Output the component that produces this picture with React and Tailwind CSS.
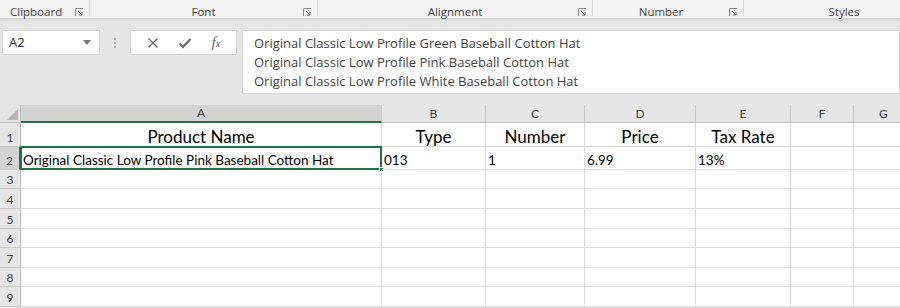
import React from 'react'

const cols = [
  { key: 'A', w: 'w-[361px]' },
  { key: 'B', w: 'w-[104px]' },
  { key: 'C', w: 'w-[99px]' },
  { key: 'D', w: 'w-[111px]' },
  { key: 'E', w: 'w-[95px]' },
  { key: 'F', w: 'w-[63px]' },
  { key: 'G', w: 'w-[60px]' },
]

const rows = [
  { n: 1, h: 'h-[24px]', cells: ['Product Name', 'Type', 'Number', 'Price', 'Tax Rate', '', ''], head: true },
  { n: 2, h: 'h-[23px]', cells: ['Original Classic Low Profile Pink Baseball Cotton Hat', '013', '1', '6.99', '13%', '', ''] },
  { n: 3, h: 'h-[19px]' },
  { n: 4, h: 'h-[20px]' },
  { n: 5, h: 'h-[20px]' },
  { n: 6, h: 'h-[19px]' },
  { n: 7, h: 'h-[20px]' },
  { n: 8, h: 'h-[19px]' },
  { n: 9, h: 'h-[20px]' },
]

const groups = [
  { label: 'Clipboard', w: 'w-[90px]', launcher: true, align: 'justify-start pl-[10px]' },
  { label: 'Font', w: 'w-[228px]', launcher: true, align: 'justify-center' },
  { label: 'Alignment', w: 'w-[275px]', launcher: true, align: 'justify-center' },
  { label: 'Number', w: 'w-[151px]', launcher: true, align: 'justify-center pr-[14px]' },
  { label: 'Styles', w: 'w-[200px]', launcher: false, align: 'justify-center' },
]

function Launcher() {
  return (
    <svg width="9" height="9" viewBox="0 0 9 9" fill="none" className="absolute right-[6px] top-[8px]">
      <path d="M0.5 8V0.5H8" stroke="#8a8a8a" />
      <path d="M3 3l4 4M7 4v3H4" stroke="#666" />
    </svg>
  )
}

export default function App() {
  const font = { fontFamily: '"Open Sans", "Noto Sans", sans-serif' }
  const cellFont = { fontFamily: 'Lato, "Liberation Sans", sans-serif' }

  return (
    <div className="w-[900px] h-[308px] overflow-hidden bg-[#e6e6e6] flex flex-col" style={font}>
      {/* Ribbon group labels */}
      <div className="h-[19px] bg-[#f3f3f3] border-b border-[#d6d6d6] shadow-[0_1px_2px_rgba(0,0,0,0.08)] flex shrink-0">
        {groups.map(g => (
          <div key={g.label} className={`${g.w} shrink-0 relative flex`}>
            <div className={`flex-1 flex items-center ${g.align} pt-[5px] text-[11.5px] leading-[14px] text-[#444]`}>
              {g.label}
            </div>
            {g.launcher && <Launcher />}
            {g.launcher && <span className="w-px h-[16px] bg-[#d6d6d6]" />}
          </div>
        ))}
      </div>

      {/* Formula bar */}
      <div className="h-[86px] flex items-start pt-[11px] shrink-0">
        <div className="ml-[2px] w-[98px] h-[25px] bg-white border border-[#d4d4d4] flex items-center justify-between pl-[6px] pr-[8px]">
          <span className="text-[13px] text-[#333]">A2</span>
          <svg width="8" height="5" viewBox="0 0 8 5"><path d="M0 0h8L4 5z" fill="#777" /></svg>
        </div>
        <div className="w-[30px] h-[25px] flex flex-col items-center justify-center gap-[2px]">
          <span className="w-[2px] h-[2px] bg-[#aaa]" />
          <span className="w-[2px] h-[2px] bg-[#aaa]" />
          <span className="w-[2px] h-[2px] bg-[#aaa]" />
        </div>
        <div className="w-[107px] h-[25px] bg-white border border-[#d4d4d4] flex items-center justify-around px-[6px]">
          <svg width="12" height="12" viewBox="0 0 12 12"><path d="M1.5 1.5l9 9M10.5 1.5l-9 9" stroke="#666" strokeWidth="1.3" /></svg>
          <svg width="14" height="12" viewBox="0 0 14 12"><path d="M1.5 6.5l3.5 3.5L12.5 2" stroke="#666" strokeWidth="2" fill="none" /></svg>
          <span className="text-[14px] italic text-[#555]" style={{ fontFamily: '"Liberation Serif", serif' }}>f<span className="text-[10px]">x</span></span>
        </div>
        <div className="ml-[5px] flex-1 h-[64px] bg-white border border-[#d4d4d4] pl-[11px] pt-[3px] text-[13px] leading-[19px] text-[#444]">
          <div>Original Classic Low Profile Green Baseball Cotton Hat</div>
          <div>Original Classic Low Profile Pink Baseball Cotton Hat</div>
          <div>Original Classic Low Profile White Baseball Cotton Hat</div>
        </div>
      </div>

      {/* Grid */}
      <div className="flex flex-col bg-white">
        {/* column headers */}
        <div className="flex h-[18px] bg-[#e6e6e6]">
          <div className="w-[21px] shrink-0 border-r border-[#bdbdbd] border-b border-[#bdbdbd] relative">
            <svg width="11" height="11" viewBox="0 0 11 11" className="absolute right-[2px] bottom-[2px]"><path d="M11 0v11H0z" fill="#b5b5b5" /></svg>
          </div>
          {cols.map(c => (
            <div
              key={c.key}
              className={`${c.w} shrink-0 flex items-center justify-center text-[12px] text-[#444] border-r border-[#c8c8c8] ${c.key === 'A' ? 'bg-[#d3d3d3] border-b-2 border-b-[#217346]' : 'border-b border-b-[#bdbdbd]'}`}
              style={cellFont}
            >
              {c.key}
            </div>
          ))}
        </div>

        {rows.map(r => (
          <div key={r.n} className={`flex ${r.h}`}>
            <div
              className={`w-[21px] shrink-0 flex items-end pb-[1px] justify-center text-[12px] leading-[14px] text-[#444] border-b border-[#c8c8c8] ${r.n === 2 ? 'bg-[#d3d3d3] border-r-2 border-r-[#217346]' : 'bg-[#e6e6e6] border-r border-r-[#bdbdbd]'}`}
              style={cellFont}
            >
              {r.n}
            </div>
            {cols.map((c, i) => {
              const v = r.cells ? r.cells[i] : ''
              return (
                <div
                  key={c.key}
                  className={`${c.w} shrink-0 border-r border-b border-[#dadada] flex items-end relative ${r.head ? 'justify-center text-[17px] leading-[18px]' : 'pl-[2px] text-[13.5px] leading-[17px]'} text-black whitespace-nowrap`}
                  style={cellFont}
                >
                  {v}
                  {r.n === 2 && c.key === 'A' && (
                    <>
                      <div className="absolute -left-[1px] -top-[1px] -right-[1px] -bottom-[1px] border-2 border-[#217346]" />
                      <div className="absolute -right-[3px] -bottom-[3px] w-[5px] h-[5px] bg-[#217346] border border-white" />
                    </>
                  )}
                </div>
              )
            })}
          </div>
        ))}
      </div>
    </div>
  )
}
